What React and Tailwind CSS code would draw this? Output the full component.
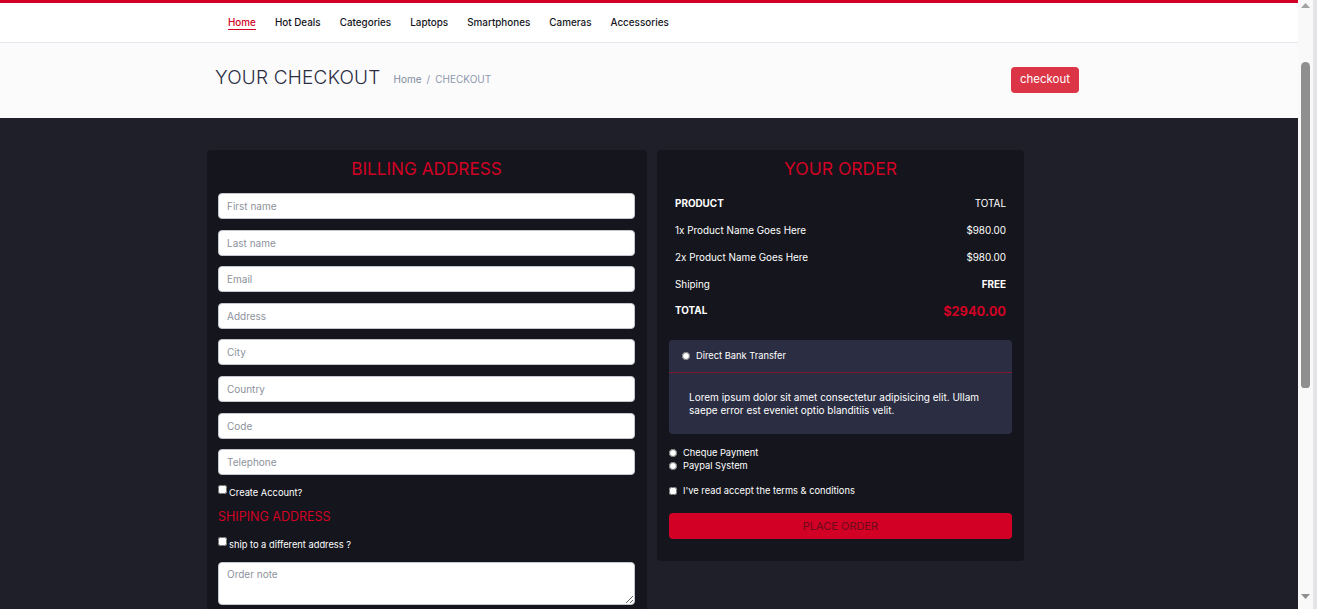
import React from "react";

const F = { fontFamily: "Inter, 'Noto Sans', sans-serif" };

function Field({ ph }) {
  return (
    <input
      type="text"
      placeholder={ph}
      className="block w-full h-[26px] rounded-[4px] border border-[#c3c6ce] bg-white px-[8px] text-[10px] text-[#2b2d42] placeholder:text-[#8d929c] outline-none"
    />
  );
}

function ScrollBar() {
  return (
    <div className="flex h-full shrink-0">
      <div className="w-[15px] h-full bg-[#f9f9f9] flex flex-col items-center">
        <div className="h-[15px] flex items-start justify-center pt-[3px]">
          <svg width="9" height="5" viewBox="0 0 9 5">
            <polygon points="4.5,0 9,5 0,5" fill="#a3a3a3" />
          </svg>
        </div>
        <div className="h-[47px]" />
        <div className="w-[9px] h-[326px] rounded-t-[5px] rounded-b-[4px] bg-[#8f8f8f]" />
        <div className="flex-1" />
        <div className="h-[15px] flex items-end justify-center pb-[10px]">
          <svg width="9" height="5" viewBox="0 0 9 5">
            <polygon points="0,0 9,0 4.5,5" fill="#8f8f8f" />
          </svg>
        </div>
      </div>
      <div className="w-[4px] h-full bg-[#e4e4e6]" />
    </div>
  );
}

export default function App() {
  const links = ["Home", "Hot Deals", "Categories", "Laptops", "Smartphones", "Cameras", "Accessories"];
  const fields = ["First name", "Last name", "Email", "Address", "City", "Country", "Code", "Telephone"];
  return (
    <div style={F} className="h-[609px] overflow-hidden flex bg-[#1e1f29]">
      <div className="flex-1 min-w-0 h-full overflow-hidden">
        {/* nav */}
        <nav className="h-[43px] bg-white border-t-[3px] border-t-[#d10024] border-b border-b-[#e4e7ed] flex items-center pl-[228px]">
          <ul className="flex items-center gap-[19px] text-[9.9px] font-medium text-[#15161d]">
            {links.map((l, i) => (
              <li key={l} className={i === 0 ? "text-[#d10024] underline underline-offset-[3px]" : ""}>
                {l}
              </li>
            ))}
          </ul>
        </nav>

        {/* breadcrumb */}
        <div className="h-[75px] bg-[#fbfbfc] flex items-center">
          <div className="ml-[215px] w-[864px] flex items-center -mt-[6px]">
            <h3 className="text-[19px] font-light tracking-[0.2px] text-[#2b2d42] leading-none">YOUR CHECKOUT</h3>
            <div className="ml-[13px] mt-[3px] text-[10px] text-[#8d99ae] flex items-center gap-[5px]">
              <span className="text-[#7f8ba0]">Home</span>
              <span>/</span>
              <span>CHECKOUT</span>
            </div>
            <button className="ml-auto mt-[5px] h-[26px] w-[68px] rounded-[4px] bg-[#dc3545] text-white text-[11.5px]">
              checkout
            </button>
          </div>
        </div>

        {/* section */}
        <div className="pt-[32px] pb-[30px] pl-[207px] flex items-start gap-[10px]">
          {/* billing */}
          <div className="w-[440px] bg-[#15161d] rounded-[4px] pl-[11px] pr-[12px] pt-[9px] pb-[20px]">
            <h3 className="text-center text-[17.2px] text-[#d10024] leading-[20px] mb-[14px]">BILLING ADDRESS</h3>
            <div className="flex flex-col gap-[10.6px]">
              {fields.map((f) => (
                <Field key={f} ph={f} />
              ))}
            </div>
            <label className="flex items-start gap-[2px] mt-[10px] text-[9.3px] text-white">
              <input type="checkbox" className="w-[9px] h-[9px] m-0" />
              <span className="mt-[1px]">Create Account?</span>
            </label>
            <h4 className="mt-[9px] text-[12.5px] text-[#d10024] leading-[16px]">SHIPING ADDRESS</h4>
            <label className="flex items-start gap-[2px] mt-[12px] text-[9.3px] text-white">
              <input type="checkbox" className="w-[9px] h-[9px] m-0" />
              <span className="mt-[1px]">ship to a different address ?</span>
            </label>
            <textarea
              placeholder="Order note"
              className="mt-[10px] block w-full h-[43px] rounded-[4px] border border-[#c3c6ce] bg-white px-[8px] py-[4px] text-[10px] placeholder:text-[#8d929c] outline-none"
            />
          </div>

          {/* order */}
          <div className="w-[367px] bg-[#15161d] rounded-[4px] px-[12px] pt-[9px] pb-[22px]">
            <h3 className="text-center text-[17.5px] text-[#d10024] leading-[20px]">YOUR ORDER</h3>
            <div className="px-[6px] mt-[11px] text-[9.9px] text-white">
              <div className="flex justify-between h-[27px] items-center">
                <span className="font-bold">PRODUCT</span>
                <span>TOTAL</span>
              </div>
              <div className="flex justify-between h-[27px] items-center">
                <span>1x Product Name Goes Here</span>
                <span>$980.00</span>
              </div>
              <div className="flex justify-between h-[27px] items-center">
                <span>2x Product Name Goes Here</span>
                <span>$980.00</span>
              </div>
              <div className="flex justify-between h-[27px] items-center">
                <span>Shiping</span>
                <span className="font-bold">FREE</span>
              </div>
              <div className="flex justify-between h-[27px] items-center">
                <span className="font-bold -mt-[3px]">TOTAL</span>
                <span className="font-bold text-[12.8px] text-[#d10024]">$2940.00</span>
              </div>
            </div>

            <div className="mt-[15px] bg-[#2b2d42] rounded-[4px] pb-[17px]">
              <label className="flex items-center gap-[6px] h-[33px] pl-[13px] border-b border-b-[#7c1a33] text-[9.3px] text-white">
                <input type="radio" name="pay" className="w-[8px] h-[8px] m-0" />
                <span>Direct Bank Transfer</span>
              </label>
              <p className="pl-[20px] pr-[20px] pt-[18px] text-[10px] leading-[13px] text-white">
                Lorem ipsum dolor sit amet consectetur adipisicing elit. Ullam saepe error est eveniet optio blanditiis velit.
              </p>
            </div>

            <div className="mt-[12px] text-[9.3px] text-white">
              <label className="flex items-center gap-[6px] h-[13px]">
                <input type="radio" name="pay" className="w-[8px] h-[8px] m-0" />
                <span>Cheque Payment</span>
              </label>
              <label className="flex items-center gap-[6px] h-[13px]">
                <input type="radio" name="pay" className="w-[8px] h-[8px] m-0" />
                <span>Paypal System</span>
              </label>
              <label className="flex items-center gap-[6px] h-[13px] mt-[12px]">
                <input type="checkbox" className="w-[8px] h-[8px] m-0" />
                <span>I've read accept the terms &amp; conditions</span>
              </label>
            </div>

            <button className="mt-[16px] w-full h-[26px] rounded-[4px] bg-[#d10024] text-[#6e0a1c] text-[11px]">
              PLACE ORDER
            </button>
          </div>
        </div>
      </div>
      <ScrollBar />
    </div>
  );
}
